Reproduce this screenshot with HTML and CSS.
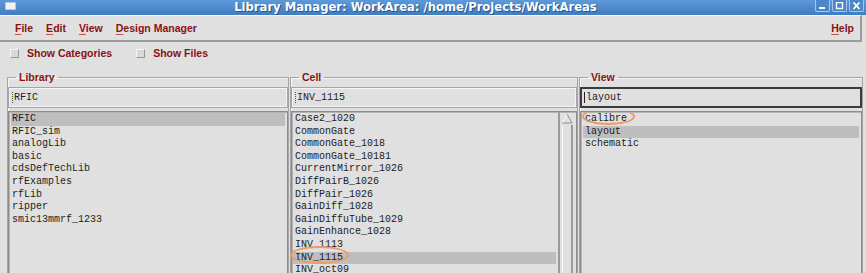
FILE: index.html
```html
<!DOCTYPE html>
<html>
<head>
<meta charset="utf-8">
<title>Library Manager</title>
<link rel="stylesheet" href="styles.css">
</head>
<body>
<div class="window">
  <div class="titlebar">
    <span class="win-icon"></span>
    <span class="title">Library Manager: WorkArea: /home/Projects/WorkAreas</span>
    <div class="win-btns">
      <span class="wbtn"><svg width="9" height="8" viewBox="0 0 9 8"><rect x="1" y="5" width="6" height="2" fill="#fff"/></svg></span>
      <span class="wbtn"><svg width="9" height="8" viewBox="0 0 9 8"><rect x="1.5" y="0.5" width="6" height="6" fill="none" stroke="#fff" stroke-width="1.4"/></svg></span>
      <span class="wbtn"><svg width="9" height="8" viewBox="0 0 9 8"><path d="M1.5 0.5 L7.5 7 M7.5 0.5 L1.5 7" stroke="#fff" stroke-width="1.8"/></svg></span>
    </div>
  </div>

  <div class="menubar">
    <nav class="menus">
      <span class="menu"><u>F</u>ile</span>
      <span class="menu"><u>E</u>dit</span>
      <span class="menu"><u>V</u>iew</span>
      <span class="menu"><u>D</u>esign Manager</span>
    </nav>
    <span class="menu"><u>H</u>elp</span>
  </div>

  <div class="options">
    <label class="opt"><span class="box"></span>Show Categories</label>
    <label class="opt"><span class="box"></span>Show Files</label>
  </div>

  <div class="columns">
    <fieldset class="group">
      <legend>Library</legend>
      <div class="entry"><span class="caret"></span>RFIC</div>
      <div class="list">
        <div class="items lib-items">
          <div class="row sel">RFIC</div>
          <div class="row">RFIC_sim</div>
          <div class="row">analogLib</div>
          <div class="row">basic</div>
          <div class="row">cdsDefTechLib</div>
          <div class="row">rfExamples</div>
          <div class="row">rfLib</div>
          <div class="row">ripper</div>
          <div class="row">smic13mmrf_1233</div>
        </div>
      </div>
    </fieldset>

    <fieldset class="group">
      <legend>Cell</legend>
      <div class="entry"><span class="caret"></span>INV_1115</div>
      <div class="list">
        <div class="items cell-items">
          <div class="row">Case2_1020</div>
          <div class="row">CommonGate</div>
          <div class="row">CommonGate_1018</div>
          <div class="row">CommonGate_10181</div>
          <div class="row">CurrentMirror_1026</div>
          <div class="row">DiffPairB_1026</div>
          <div class="row">DiffPair_1026</div>
          <div class="row">GainDiff_1028</div>
          <div class="row">GainDiffuTube_1029</div>
          <div class="row">GainEnhance_1028</div>
          <div class="row">INV_1113</div>
          <div class="row sel">INV_1115</div>
          <div class="row">INV_oct09</div>
        </div>
        <div class="scroll">
          <svg class="arrow" width="12" height="11" viewBox="0 0 12 11"><path d="M6 1 L11 10 L1 10 Z" fill="#e2e2e2" stroke="#8e8e8e" stroke-width="1"/><path d="M6 1.2 L1.4 9.6" stroke="#ffffff" stroke-width="1.2"/></svg>
          <div class="thumb"></div>
        </div>
      </div>
    </fieldset>

    <fieldset class="group">
      <legend>View</legend>
      <div class="entry focus"><span class="caret solid"></span>layout</div>
      <div class="list">
        <div class="items view-items">
          <div class="row">calibre</div>
          <div class="row sel">layout</div>
          <div class="row">schematic</div>
        </div>
      </div>
    </fieldset>
  </div>
</div>

<span class="mark mark-calibre"></span>
<span class="mark mark-inv"></span>
</body>
</html>
```

FILE: styles.css
```css
* { box-sizing: border-box; }

body {
  margin: 0;
  width: 866px;
  height: 273px;
  overflow: hidden;
  background: #e0e0e0;
  font-family: "Liberation Sans", Arial, sans-serif;
  position: relative;
}

.window { width: 866px; }

/* title bar */
.titlebar {
  height: 15px;
  display: flex;
  align-items: center;
  background: linear-gradient(#5f99d8, #3f7cc2);
}
.win-icon {
  width: 11px;
  height: 8px;
  margin-left: 5px;
  margin-top: -4px;
  background: #f2f2f2;
  border: 1px solid #b8c8dc;
  border-radius: 1px;
}
.title {
  flex: 1;
  text-align: center;
  color: #fff;
  font: bold 11.6px/15px "DejaVu Sans", sans-serif;
  text-shadow: 1px 1px 0 #2b5282;
  white-space: nowrap;
}
.win-btns {
  display: flex;
  gap: 2px;
  align-self: flex-start;
  margin-right: 2px;
}
.wbtn {
  width: 15px;
  height: 12px;
  border: 1px solid #a6c6ec;
  border-top: none;
  border-radius: 0 0 2px 2px;
  background: #4b87ca;
  display: flex;
  align-items: center;
  justify-content: center;
}

/* menu bar */
.menubar {
  height: 27px;
  margin-right: 4px;
  display: flex;
  align-items: center;
  justify-content: space-between;
  padding: 0 6px 0 15px;
  border-top: 1px solid #fafafa;
  border-bottom: 2px solid #9c9c9c;
  border-right: 2px solid #9c9c9c;
}
.menus { display: flex; gap: 13px; }
.menu {
  color: #8a1212;
  font-weight: bold;
  font-size: 10.5px;
  white-space: nowrap;
}
.menu u {
  text-decoration: underline;
  text-decoration-color: #d04a4a;
  text-underline-offset: 2px;
}

/* options */
.options {
  height: 22px;
  display: flex;
  align-items: center;
  gap: 24px;
  padding-left: 10px;
}
.opt {
  display: flex;
  align-items: center;
  gap: 8px;
  color: #8a1212;
  font-weight: bold;
  font-size: 10.5px;
}
.box {
  width: 9px;
  height: 9px;
  background: #d8d8d8;
  border: 1px solid #f6f6f6;
  border-right-color: #969696;
  border-bottom-color: #969696;
}

/* columns */
.columns {
  display: grid;
  grid-template-columns: 282px 288px 284px;
  column-gap: 1px;
  padding-left: 7px;
  margin-top: 7px;
}
.group {
  margin: 0;
  padding: 4px 0 0;
  min-width: 0;
  height: 230px;
  border: 1px solid #a4a4a4;
  border-bottom: none;
  box-shadow: inset 1px 1px 0 #f8f8f8;
}
.group legend {
  margin-left: 8px;
  padding: 0 3px;
  color: #8a1212;
  font: bold 10.5px/12px "Liberation Sans", Arial, sans-serif;
}

.entry {
  height: 21px;
  display: flex;
  align-items: center;
  padding-left: 3px;
  border: 1px solid #a6a6a6;
  box-shadow: inset 1px 1px 0 #f4f4f4, inset -1px -1px 0 #f4f4f4;
  font: 10px "Liberation Mono", "Courier New", monospace;
  color: #1e1e1e;
}
.entry.focus {
  border: 2px solid #3c3c3c;
  box-shadow: none;
  padding-left: 2px;
}
.caret {
  width: 2px;
  height: 11px;
  border-left: 1px dotted #555;
}
.caret.solid {
  border-left: 1px solid #222;
}

.list {
  margin-top: 3px;
  height: 200px;
  display: flex;
  border: 1px solid #8c8c8c;
  box-shadow: inset 1px 1px 0 #b4b4b4;
}
.items {
  flex: 1;
  padding: 1px 2px;
}
.cell-items { padding-left: 1px; }
.row {
  height: 12.6px;
  padding-left: 1px;
  font: 10px/12.6px "Liberation Mono", "Courier New", monospace;
  color: #1c1c1c;
  white-space: pre;
}
.cell-items .row,
.view-items .row { padding-left: 2px; }
.row.sel { background: #bebebe; }

.scroll {
  width: 16px;
  display: flex;
  flex-direction: column;
  align-items: center;
  border-left: 2px solid #9a9a9a;
  margin-right: 2px;
  padding-top: 1px;
}
.arrow { display: block; }
.thumb {
  flex: 1;
  width: 11px;
  margin-top: 1px;
  border-left: 1px solid #f8f8f8;
  border-right: 2px solid #9a9a9a;
}

/* annotation marks */
.mark {
  position: absolute;
  border: 2px solid #f09a62;
  border-radius: 50%;
}
.mark-calibre {
  left: 582px;
  top: 108px;
  width: 53px;
  height: 17px;
  border-top-color: transparent;
  border-right-color: #f09a62;
}
.mark-inv {
  left: 290px;
  top: 246px;
  width: 59px;
  height: 18px;
}
```
